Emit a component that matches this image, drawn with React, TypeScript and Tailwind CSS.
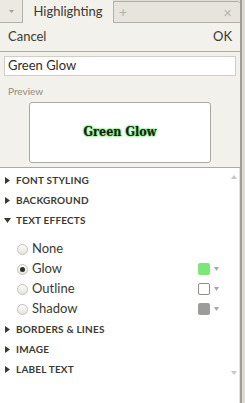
import React from 'react';

const font = { fontFamily: 'Lato, "Open Sans", sans-serif' };

function TriRight() {
  return (
    <svg width="5" height="7" viewBox="0 0 5 7" className="shrink-0">
      <path d="M0 0 L5 3.5 L0 7 Z" fill="#3b3a30" />
    </svg>
  );
}

function TriDown() {
  return (
    <svg width="7" height="5" viewBox="0 0 7 5" className="shrink-0">
      <path d="M0 0 L7 0 L3.5 5 Z" fill="#3b3a30" />
    </svg>
  );
}

function Section({ label, open }: { label: string; open?: boolean }) {
  return (
    <div className="h-[20px] flex items-center gap-[5px] pl-[4px]">
      <div className="w-[7px] flex justify-center">{open ? <TriDown /> : <TriRight />}</div>
      <span className="text-[10px] font-bold tracking-[0.2px] text-[#3b3a30]">{label}</span>
    </div>
  );
}

function Radio({ label, checked, swatch }: { label: string; checked?: boolean; swatch?: string }) {
  return (
    <div className="h-[20px] flex items-center pl-[17px] pr-[9px]">
      <div className="w-[11px] h-[11px] rounded-full border border-[#c4c2ba] bg-gradient-to-b from-[#fdfdfc] to-[#e6e4de] flex items-center justify-center">
        {checked && <div className="w-[5px] h-[5px] rounded-full bg-[#2e2d26]" />}
      </div>
      <span className="ml-[4px] text-[13px] text-[#3b3a30] flex-1">{label}</span>
      {swatch && (
        <div className="flex items-center gap-[4px]">
          <div
            className={`w-[12px] h-[12px] rounded-[2px] ${swatch === 'white' ? 'bg-white border border-[#8f8d85]' : swatch === 'green' ? 'bg-[#7de67a]' : 'bg-[#9c9c9a]'}`}
          />
          <svg width="5" height="4" viewBox="0 0 5 4">
            <path d="M0 0 L5 0 L2.5 4 Z" fill="#a8a69e" />
          </svg>
        </div>
      )}
    </div>
  );
}

export default function App() {
  return (
    <div className="w-[245px] h-[403px] flex bg-[#edebe4] overflow-hidden" style={font}>
      <div className="w-[240px] flex flex-col">
        {/* TAB BAR */}
        <div className="h-[23px] flex items-stretch bg-[#e0ded6]">
          <div className="w-[23px] flex items-center justify-center border-r border-b border-[#b2b0a6] bg-[#ebe9e2]">
            <svg width="5" height="3" viewBox="0 0 5 3">
              <path d="M0 0 L5 0 L2.5 3 Z" fill="#a3a199" />
            </svg>
          </div>
          <div className="w-[90px] flex items-center justify-center bg-[#f2f1eb] text-[13px] text-[#3b3a30]">
            Highlighting
          </div>
          <div className="flex-1 mt-[1px] flex items-center justify-between pl-[5px] pr-[8px] border-l border-b border-t border-[#b2b0a6] rounded-tr-[3px] bg-[#e6e4dc] text-[#b5b3ab]">
            <span className="text-[14px] leading-none">+</span>
            <span className="text-[11px] leading-none">✕</span>
          </div>
        </div>

        {/* ACTION ROW */}
        <div className="h-[29px] flex items-center justify-between px-[8px] bg-[#f2f1eb] border-b border-[#aeaca2] text-[13px] text-[#3b3a30]">
          <span>Cancel</span>
          <span>OK</span>
        </div>

        {/* NAME INPUT */}
        <div className="bg-[#f2f1eb] px-[4px] pt-[4px]">
          <div className="h-[20px] bg-white border border-[#cfcdc5] flex items-center px-[3px] text-[13px] text-[#2e2d26]">
            Green Glow
          </div>
        </div>

        {/* PREVIEW */}
        <div className="bg-[#f2f1eb] pt-[9px] pb-[4px] border-b border-[#aeaca2]">
          <div className="px-[8px] text-[10px] text-[#8d8b82] h-[12px] leading-[12px]">Preview</div>
          <div className="mx-[29px] mt-[5px] h-[61px] bg-white border border-[#a9a79e] rounded-[3px] flex items-center justify-center">
            <span
              className="text-[12.5px] font-bold text-[#1c1c18]"
              style={{
                fontFamily: '"DejaVu Serif", "Liberation Serif", serif',
                fontStretch: 'condensed',
                textShadow: '0 0 2px #6fe26b, 0 0 2px #6fe26b, 0 0 2px #6fe26b, 0 0 1px #6fe26b',
              }}
            >
              Green Glow
            </span>
          </div>
        </div>

        {/* SETTINGS LIST */}
        <div className="flex-1 bg-white flex">
          <div className="flex-1 flex flex-col pt-[2px]">
            <Section label="FONT STYLING" />
            <Section label="BACKGROUND" />
            <Section label="TEXT EFFECTS" open />
            <div className="h-[9px]" />
            <Radio label="None" />
            <Radio label="Glow" checked swatch="green" />
            <Radio label="Outline" swatch="white" />
            <Radio label="Shadow" swatch="gray" />
            <Section label="BORDERS & LINES" />
            <Section label="IMAGE" />
            <Section label="LABEL TEXT" />
          </div>
          <div className="w-[12px] flex flex-col items-center justify-between pt-[7px] pb-[28px] border-r border-[#e4e2dc]">
            <svg width="6" height="4" viewBox="0 0 6 4">
              <path d="M0 4 L6 4 L3 0 Z" fill="#c9c7c0" />
            </svg>
            <svg width="6" height="4" viewBox="0 0 6 4">
              <path d="M0 0 L6 0 L3 4 Z" fill="#c9c7c0" />
            </svg>
          </div>
        </div>
      </div>
      {/* WINDOW EDGE */}
      <div className="w-[5px] flex">
        <div className="w-[2px] bg-[#9f9d94]" />
        <div className="flex-1 bg-[#dcdad2]" />
      </div>
    </div>
  );
}
